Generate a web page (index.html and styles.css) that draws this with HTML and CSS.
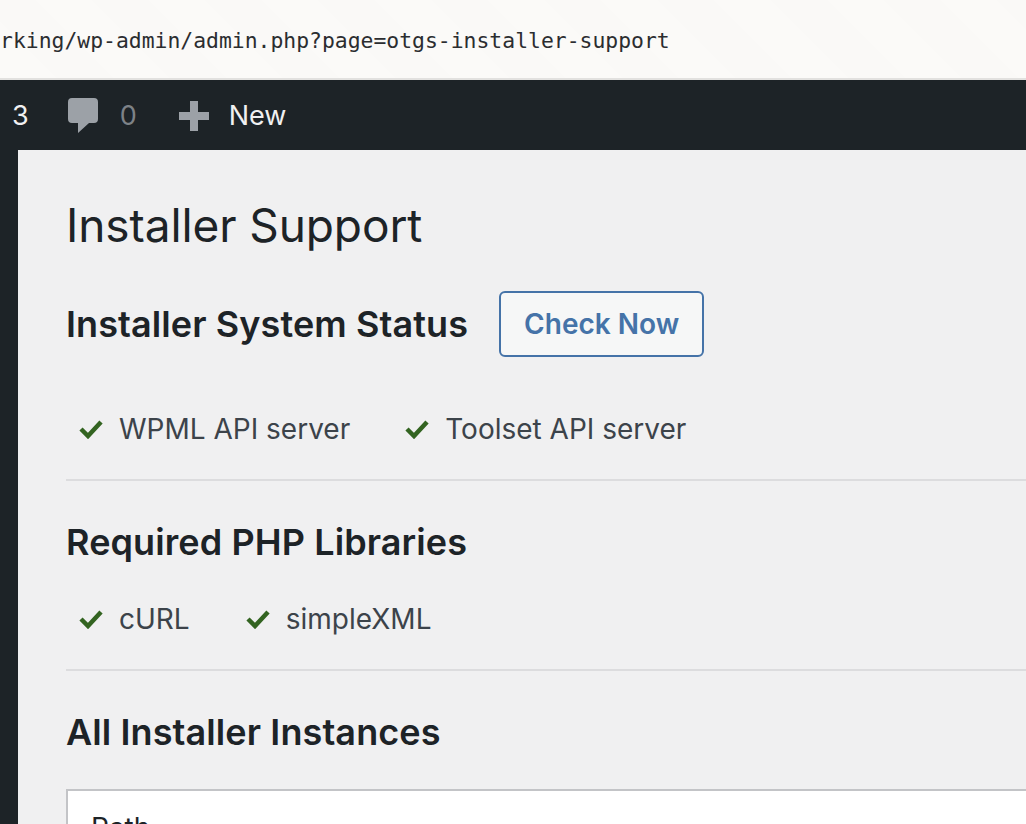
FILE: index.html
```html
<!DOCTYPE html>
<html lang="en">
<head>
    <meta charset="UTF-8">
    <meta name="viewport" content="width=device-width, initial-scale=1.0">
    <title>Installer Support</title>
    <link rel="stylesheet" href="styles.css">
</head>
<body>
    <div class="url-bar">
        <span class="url-text">rking/wp-admin/admin.php?page=otgs-installer-support</span>
    </div>

    <div class="admin-bar">
        <span class="bar-count">3</span>
        <svg class="bar-icon comment-icon" width="30" height="36" viewBox="0 0 30 36">
            <path d="M4 0H26Q30 0 30 4V21Q30 25 26 25H21L10 35V25H4Q0 25 0 21V4Q0 0 4 0Z" fill="#9ca1a7"/>
        </svg>
        <span class="bar-count muted">0</span>
        <svg class="bar-icon plus-icon" width="30" height="30" viewBox="0 0 30 30">
            <path d="M11 0H19V11H30V19H19V30H11V19H0V11H11Z" fill="#9ca1a7"/>
        </svg>
        <span class="bar-new">New</span>
    </div>

    <div class="layout">
        <div class="side-menu"></div>
        <div class="content">
            <h1>Installer Support</h1>

            <div class="section-head">
                <h2>Installer System Status</h2>
                <button class="check-btn">Check Now</button>
            </div>
            <ul class="checks status-checks">
                <li>
                    <svg class="tick" width="24" height="20" viewBox="0 0 24 20"><path d="M2 10L9 17L22 3" fill="none" stroke="#336421" stroke-width="4.5"/></svg>
                    WPML API server
                </li>
                <li>
                    <svg class="tick" width="24" height="20" viewBox="0 0 24 20"><path d="M2 10L9 17L22 3" fill="none" stroke="#336421" stroke-width="4.5"/></svg>
                    Toolset API server
                </li>
            </ul>
            <hr>

            <h2>Required PHP Libraries</h2>
            <ul class="checks lib-checks">
                <li>
                    <svg class="tick" width="24" height="20" viewBox="0 0 24 20"><path d="M2 10L9 17L22 3" fill="none" stroke="#336421" stroke-width="4.5"/></svg>
                    cURL
                </li>
                <li>
                    <svg class="tick" width="24" height="20" viewBox="0 0 24 20"><path d="M2 10L9 17L22 3" fill="none" stroke="#336421" stroke-width="4.5"/></svg>
                    simpleXML
                </li>
            </ul>
            <hr>

            <h2>All Installer Instances</h2>
            <div class="instances">
                <div class="instances-head">Path</div>
            </div>
        </div>
    </div>
</body>
</html>
```

FILE: styles.css
```css
html, body {
    margin: 0;
    height: 824px;
    overflow: hidden;
}

body {
    font-family: Inter, "Liberation Sans", sans-serif;
    background: #f0f0f1;
    color: #1d2327;
}

.url-bar {
    height: 78px;
    padding-top: 3px;
    box-sizing: border-box;
    border-bottom: 0;
    background: repeating-linear-gradient(45deg, #fbfaf8 0, #fbfaf8 40px, #faf9f7 40px, #faf9f7 80px);
    display: flex;
    align-items: center;
    overflow: hidden;
}

.url-text {
    font-family: "DejaVu Sans Mono", monospace;
    font-size: 21.4px;
    color: #2b2d30;
    white-space: nowrap;
}

.admin-bar {
    height: 70px;
    border-top: 2px solid #e2e1df;
    background: #1d2327;
    display: flex;
    align-items: center;
    padding-left: 12px;
    color: #f0f0f1;
    font-size: 27px;
}

.bar-count {
    margin-right: 39px;
}

.bar-count.muted {
    color: #7d8287;
    margin-right: 42px;
}

.comment-icon {
    margin-right: 22px;
    margin-top: 2px;
}

.plus-icon {
    margin-right: 20px;
    margin-top: 2px;
}

.layout {
    display: flex;
    height: 674px;
}

.side-menu {
    width: 18px;
    flex: none;
    background: #1d2327;
}

.content {
    flex: 1;
    padding: 0 0 0 48px;
    overflow: hidden;
}

h1 {
    margin: 44px 0 0;
    height: 62px;
    line-height: 62px;
    font-size: 46px;
    font-weight: 400;
    letter-spacing: -0.1px;
}

h2 {
    margin: 0;
    font-size: 36px;
    font-weight: 600;
    letter-spacing: 0.1px;
    line-height: 44px;
}

.section-head {
    display: flex;
    align-items: center;
    gap: 31px;
    margin-top: 35px;
    height: 66px;
}

.check-btn {
    width: 205px;
    height: 66px;
    background: #f6f7f7;
    border: 2px solid #4573a8;
    border-radius: 6px;
    color: #4573a8;
    font: 600 28px Inter, "Liberation Sans", sans-serif;
    cursor: pointer;
}

.checks {
    list-style: none;
    margin: 0;
    padding: 0 0 0 13px;
    display: flex;
    color: #3c434a;
    font-size: 28px;
    line-height: 40px;
}

.checks li {
    display: flex;
    align-items: center;
    gap: 16px;
}

.status-checks {
    margin-top: 52px;
    gap: 55px;
}

.lib-checks {
    margin-top: 35px;
    gap: 56px;
}

hr {
    border: 0;
    height: 2px;
    background: #dcdcde;
    margin: 30px 0 0;
}

hr + h2 {
    margin-top: 39px;
}

.instances {
    margin-top: 35px;
    background: #fff;
    border: 2px solid #c3c4c7;
    border-right: 0;
    height: 200px;
    padding: 20px 0 0 23px;
    font-size: 28px;
}
```
